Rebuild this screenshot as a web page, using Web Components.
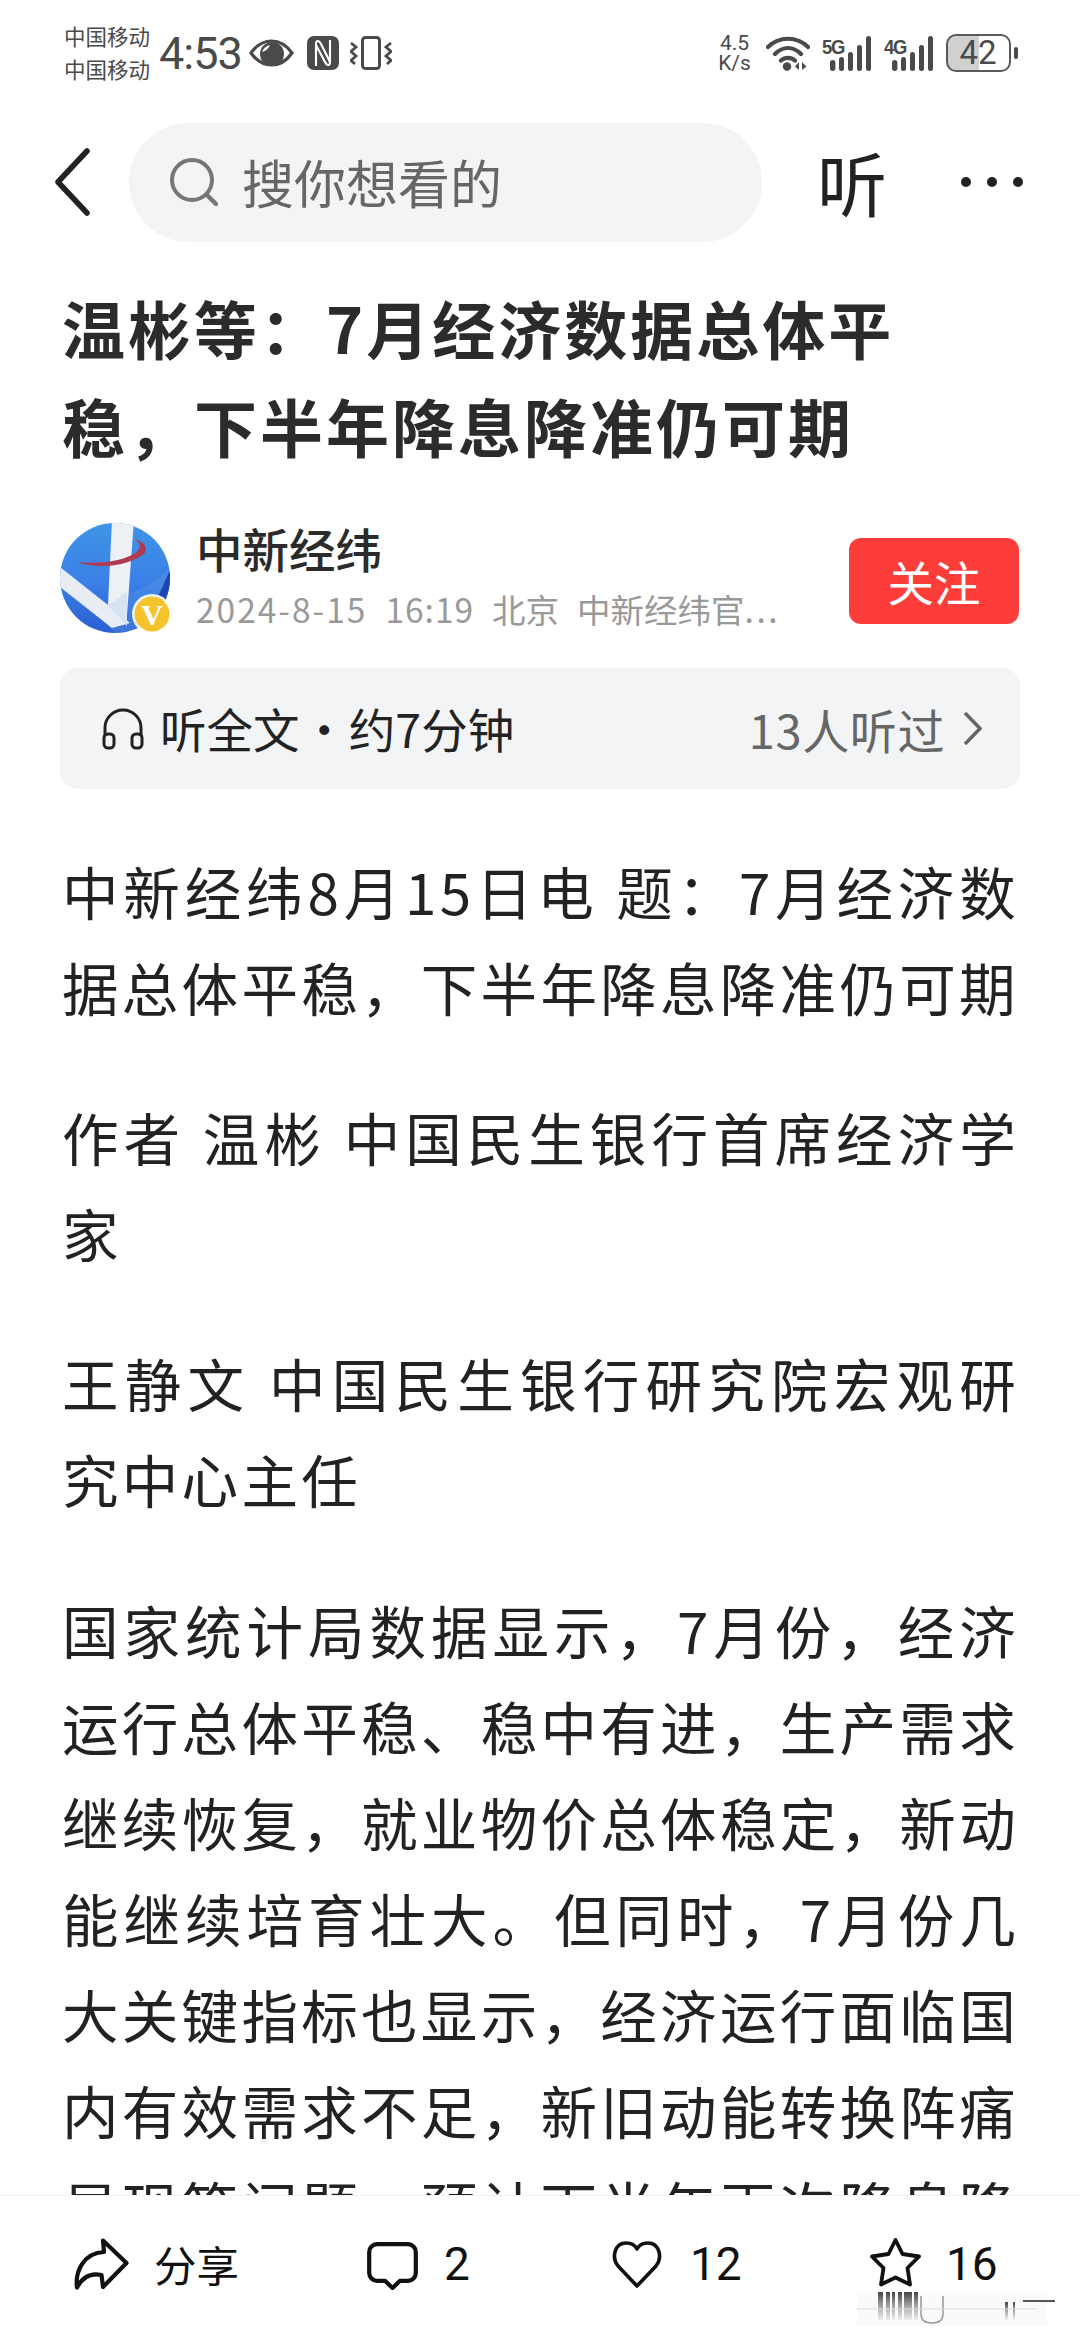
<!DOCTYPE html>
<html lang="zh">
<head>
<meta charset="utf-8">
<style>
  html, body { margin: 0; background: #fff; }
  body { font-family: "Noto Sans CJK SC", "Noto Sans", sans-serif; }
</style>
</head>
<body>
<news-page>
  <status-bar slot="top"></status-bar>
  <nav-bar slot="top"></nav-bar>
  <article-head slot="top" headline="温彬等：7月经济数据总体平稳，下半年降息降准仍可期"></article-head>
  <author-row slot="top" name="中新经纬"></author-row>
  <listen-card slot="top"></listen-card>
  <news-para>中新经纬8月15日电 题：7月经济数据总体平稳，下半年降息降准仍可期</news-para>
  <news-para>作者 温彬 中国民生银行首席经济学家</news-para>
  <news-para>王静文 中国民生银行研究院宏观研究中心主任</news-para>
  <news-para>国家统计局数据显示，7月份，经济运行总体平稳、稳中有进，生产需求继续恢复，就业物价总体稳定，新动能继续培育壮大。但同时，7月份几大关键指标也显示，经济运行面临国内有效需求不足，新旧动能转换阵痛显现等问题。预计下半年再次降息降</news-para>
  <action-bar slot="bottom"></action-bar>
</news-page>

<script>
const CJK = '"Noto Sans CJK SC", "Noto Sans", sans-serif';

class NewsPage extends HTMLElement {
  constructor() {
    super();
    this.attachShadow({mode: "open"});
    this.shadowRoot.innerHTML = `<style>
      :host { display: flex; flex-direction: column; width: 1080px; height: 2340px; overflow: hidden; background: #fff; position: relative; }
      #body { flex: 1; min-height: 0; overflow: hidden; padding: 0 61px 0 62px; }
      /* smeared gesture bar left in the screenshot */
      #smear { position: absolute; left: 857px; top: 2292px; }
    </style>
    <slot name="top"></slot>
    <div id="body"><slot></slot></div>
    <slot name="bottom"></slot>
    <svg id="smear" width="198" height="34" viewBox="0 0 198 34">
      <defs>
        <linearGradient id="sm" x1="0" y1="0" x2="0" y2="1">
          <stop offset="0" stop-color="#222" stop-opacity=".85"/><stop offset="1" stop-color="#666" stop-opacity=".1"/>
        </linearGradient>
      </defs>
      <rect x="0" y="0" width="190" height="34" fill="#f5f5f5" opacity=".5"/>
      <g fill="url(#sm)">
        <rect x="21" y="0" width="5" height="28"/><rect x="29" y="0" width="4" height="28"/><rect x="35" y="0" width="3" height="28"/>
        <rect x="41" y="0" width="4" height="28"/><rect x="47" y="0" width="8" height="28"/><rect x="57" y="0" width="4" height="28"/>
        <rect x="148" y="10" width="3" height="18"/><rect x="156" y="10" width="2" height="18"/>
      </g>
      <path d="M64 4V22Q64 31 75 31Q86 31 86 22V4" fill="none" stroke="#999" stroke-width="1.5"/>
      <path d="M0 17H180" stroke="#ddd" stroke-width="1"/>
      <path d="M166 9H198" stroke="#555" stroke-width="2"/>
    </svg>`;
  }
}

class StatusBar extends HTMLElement {
  constructor() {
    super();
    this.attachShadow({mode: "open"});
    this.shadowRoot.innerHTML = `<style>
      :host { display: flex; align-items: center; height: 106px; padding: 0 62px 0 64px; color: #4a4a4a; box-sizing: border-box; }
      #carrier { font: 400 21.5px/33px ${CJK}; width: 95px; flex: none; margin-top: -3px; }
      #time { font: 400 45px/1 Roboto, sans-serif; width: 90px; flex: none; letter-spacing: -1px; }
      .left { display: flex; align-items: center; gap: 13px; }
      .right { margin-left: auto; display: flex; align-items: center; }
      #speed { font: 400 21px/20px Roboto, sans-serif; text-align: center; width: 38px; margin-right: 12px; }
      #batt { box-sizing: border-box; width: 65px; height: 38px; border: 2.6px solid #5a5a5a; border-radius: 10px; margin-left: 13px; background: linear-gradient(90deg, #d0d0d0 50%, #fff 50%); font: 400 33px/33px Roboto, sans-serif; text-align: center; overflow: hidden; }
      #nub { width: 4.5px; height: 12px; border-radius: 2px; background: #4a4a4a; margin-left: 3px; }
      svg { display: block; flex: none; }
    </style>
    <div id="carrier">中国移动<br>中国移动</div>
    <div id="time">4:53</div>
    <div class="left">
      <svg width="45" height="28" viewBox="0 0 45 28">
        <path d="M2 14C8 5.5 15 2 22.5 2S37 5.5 43 14C37 22.5 30 26 22.5 26S8 22.5 2 14Z" fill="none" stroke="#4a4a4a" stroke-width="3.2"/>
        <circle cx="23" cy="15" r="12" fill="#4a4a4a"/><path d="M13 13a11 11 0 0 1 8-7C20 9 17 12 13 13Z" fill="#fff"/>
      </svg>
      <svg width="32" height="34" viewBox="0 0 32 34">
        <rect width="32" height="34" rx="7" fill="#4a4a4a"/>
        <path d="M9 30V8C9 4 12 4 14 8L23 26M23 4V26C23 30 20 30 18 26L9 9" fill="none" stroke="#fff" stroke-width="2.1"/>
      </svg>
      <svg width="42" height="34" viewBox="0 0 42 34" style="margin-left:-2px">
        <rect x="12.5" y="1.5" width="17" height="31" rx="3" fill="none" stroke="#4a4a4a" stroke-width="3"/>
        <path d="M1 7L6 11L1 15.5L6 20L1 24.5L5 28M41 7L36 11L41 15.5L36 20L41 24.5L37 28" fill="none" stroke="#4a4a4a" stroke-width="2.8"/>
      </svg>
    </div>
    <div class="right">
      <div id="speed">4.5<br>K/s</div>
      <svg width="44" height="35" viewBox="0 0 44 35">
        <path d="M2 11C13 0 31 0 42 11M9 18C17 10 27 10 35 18M15 24.5C19 21 25 21 29 24.5" fill="none" stroke="#4a4a4a" stroke-width="4.2" stroke-linecap="round"/>
        <circle cx="21" cy="30.5" r="4.2" fill="#4a4a4a"/><path d="M33 26L29 30.5L33 34ZM36 26L40.5 30.5L36 34Z" fill="#4a4a4a"/>
      </svg>
      <signal-bars label="5G" style="margin-left:12px"></signal-bars>
      <signal-bars label="4G" style="margin-left:13px"></signal-bars>
      <div id="batt">42</div>
      <div id="nub"></div>
    </div>`;
  }
}

class SignalBars extends HTMLElement {
  constructor() {
    super();
    this.attachShadow({mode: "open"});
    const label = this.getAttribute("label");
    this.shadowRoot.innerHTML = `<style>
      :host { display: block; width: 49px; height: 35px; position: relative; color: #4a4a4a; }
      svg { display: block; }
      span { position: absolute; left: 0; top: 0; font: 700 21px/21px "Liberation Sans", sans-serif; letter-spacing: -1.5px; transform: scaleX(.88); transform-origin: 0 0; }
    </style>
    <span>${label}</span>
    <svg width="49" height="35" viewBox="0 0 49 35">
      <g fill="#4a4a4a">
        <rect x="8" y="24" width="5.4" height="11" rx="2.7"/><rect x="17" y="21" width="5" height="14" rx="2.5"/>
        <rect x="26" y="16" width="5" height="19" rx="2.5"/><rect x="35" y="9" width="5" height="26" rx="2.5"/>
        <rect x="44" y="0" width="5" height="35" rx="2.5"/>
      </g>
    </svg>`;
  }
}

class NavBar extends HTMLElement {
  constructor() {
    super();
    this.attachShadow({mode: "open"});
    this.shadowRoot.innerHTML = `<style>
      :host { display: flex; align-items: center; height: 152px; padding: 0 0 0 55px; box-sizing: border-box; }
      #back { flex: none; margin-right: 38px; display: block; }
      #search { flex: none; width: 633px; height: 119px; border-radius: 60px; background: #f3f4f6; display: flex; align-items: center; padding-left: 41px; box-sizing: border-box; color: #666; }
      #search span { font: 400 52px/1 ${CJK}; margin-left: 24px; }
      #listen { font: 400 70px/1 ${CJK}; color: #222; margin-left: 55px; width: 70px; flex: none; }
      #more { margin-left: 74px; flex: none; }
      svg { display: block; }
    </style>
    <svg id="back" width="36" height="68" viewBox="0 0 36 68"><path d="M32 3L3 34L32 65" fill="none" stroke="#222" stroke-width="5.5" stroke-linecap="round" stroke-linejoin="round"/></svg>
    <div id="search">
      <svg width="48" height="48" viewBox="0 0 48 48"><circle cx="22" cy="22" r="20" fill="none" stroke="#777" stroke-width="4"/><path d="M37 37L46 46" stroke="#777" stroke-width="4.5" stroke-linecap="round"/></svg>
      <span>搜你想看的</span>
    </div>
    <div id="listen">听</div>
    <svg id="more" width="62" height="12" viewBox="0 0 62 12"><g fill="#222"><circle cx="5" cy="6" r="5"/><circle cx="31" cy="6" r="5"/><circle cx="57" cy="6" r="5"/></g></svg>`;
  }
}

class ArticleHead extends HTMLElement {
  constructor() {
    super();
    this.attachShadow({mode: "open"});
    this.shadowRoot.innerHTML = `<style>
      :host { display: block; padding: 20px 62px 0 62px; }
      h1 { margin: 0; font: 700 63px/98px ${CJK}; letter-spacing: 3px; color: #2b2b2b; width: 900px; }
    </style>
    <h1></h1>`;
    this.shadowRoot.querySelector("h1").textContent = this.getAttribute("headline");
  }
}

class AuthorRow extends HTMLElement {
  constructor() {
    super();
    this.attachShadow({mode: "open"});
    this.shadowRoot.innerHTML = `<style>
      :host { display: flex; align-items: center; padding: 34px 61px 0 60px; height: 176px; box-sizing: border-box; }
      #avatar { flex: none; display: block; }
      #info { flex: 1; min-width: 0; margin-left: 18px; margin-top: -7px; }
      #name { font: 500 46.5px/54px ${CJK}; color: #2b2b2b; margin-bottom: 12px; }
      #meta { font: 400 33.5px/44px ${CJK}; color: #999; white-space: nowrap; display: flex; gap: 18px; }
      #date { letter-spacing: 2px; }
      #clock { letter-spacing: 1px; }
      #dots { letter-spacing: 2.5px; }
      #follow { flex: none; width: 170px; height: 86px; border-radius: 12px; background: #fc3d39; color: #fff; font: 400 46.5px/86px ${CJK}; text-align: center; margin-top: 4px; }
    </style>
    <svg id="avatar" width="118" height="118" viewBox="0 0 118 118">
      <defs>
        <linearGradient id="av" x1="0" y1="0" x2="0" y2="1"><stop offset="0" stop-color="#3f95e6"/><stop offset=".55" stop-color="#3a7fe6"/><stop offset="1" stop-color="#2a5fd0"/></linearGradient>
        <clipPath id="avc"><circle cx="55" cy="58" r="55"/></clipPath>
      </defs>
      <circle cx="55" cy="58" r="55" fill="url(#av)"/>
      <g clip-path="url(#avc)">
        <path d="M108 50C90 70 60 75 30 88L60 118H118Z" fill="#5f9be6" opacity=".35"/>
        <path d="M110 50L118 50V90H92Z" fill="#1c46ac"/>
        <path d="M52 0H74L67 95L48 85Z" fill="#edf0f4"/>
        <path d="M0 47L48 85L70 103L52 108L0 67Z" fill="#e9edf3"/>
        <path d="M67 72L67 106L48 85Z" fill="#d7e3f1"/>
      </g>
      <path d="M17 42C38 50 70 46 85 33C88 26 82 20 73 19C82 22 82 30 72 35C58 42 38 44 17 42Z" fill="#b03a52"/>
      <circle cx="92" cy="94" r="20" fill="#fff" opacity=".9"/>
      <circle cx="92" cy="94" r="17.5" fill="#f5c42c"/>
      <text x="92" y="105" text-anchor="middle" font-family="Liberation Serif, serif" font-weight="700" font-size="30" fill="#fff">V</text>
    </svg>
    <div id="info">
      <div id="name">${this.getAttribute("name")}</div>
      <div id="meta"><span id="date">2024-8-15</span><span id="clock">16:19</span><span>北京</span><span>中新经纬官<span id="dots">...</span></span></div>
    </div>
    <div id="follow">关注</div>`;
  }
}

class ListenCard extends HTMLElement {
  constructor() {
    super();
    this.attachShadow({mode: "open"});
    this.shadowRoot.innerHTML = `<style>
      :host { display: flex; align-items: center; margin: 18px 60px 53px 60px; height: 121px; border-radius: 18px; background: #f3f4f6; padding: 0 38px 0 42px; box-sizing: border-box; }
      svg { display: block; flex: none; }
      #title { font: 400 46.5px/1 ${CJK}; color: #222; margin-left: 16px; word-spacing: -9px; }
      #count { margin-left: auto; font: 400 47px/1 ${CJK}; letter-spacing: .6px; color: #666; }
      #chev { margin-left: 18px; }
    </style>
    <svg width="42" height="42" viewBox="0 0 42 42">
      <path d="M3 28V20a18 18 0 0 1 36 0V28" fill="none" stroke="#222" stroke-width="3"/>
      <rect x="2" y="26" width="10" height="14" rx="4" fill="none" stroke="#222" stroke-width="3"/>
      <rect x="30" y="26" width="10" height="14" rx="4" fill="none" stroke="#222" stroke-width="3"/>
    </svg>
    <div id="title">听全文 · 约7分钟</div>
    <div id="count">13人听过</div>
    <svg id="chev" width="19" height="35" viewBox="0 0 19 35"><path d="M2 2L17 17.5L2 33" fill="none" stroke="#666" stroke-width="3.4"/></svg>`;
  }
}

class NewsPara extends HTMLElement {
  constructor() {
    super();
    this.attachShadow({mode: "open"});
    this.shadowRoot.innerHTML = `<style>
      :host { display: block; margin-bottom: 54px; font: 400 56.5px/96.1px ${CJK}; letter-spacing: 3.3px; color: #222; text-align: justify; }
    </style>
    <slot></slot>`;
  }
}

class ActionBar extends HTMLElement {
  constructor() {
    super();
    this.attachShadow({mode: "open"});
    this.shadowRoot.innerHTML = `<style>
      :host { display: grid; grid-template-columns: 293px 245px 257px 1fr; align-items: center; height: 145px; padding: 0 0 8px 74px; box-sizing: border-box; background: #fff; border-top: 1px solid #f2f2f2; color: #111; }
      .item { display: flex; align-items: center; }
      .item span { font: 400 46px/1 Roboto, ${CJK}; }
      .item .zh { font: 400 42.5px/1 ${CJK}; }
      svg { display: block; flex: none; }
    </style>
    <div class="item">
      <svg width="55" height="52" viewBox="0 0 55 52" style="margin-right:25px"><path d="M29 2.5L52.5 25L29 49L27.5 37C18 35 9 38 3 49.5C1 34 9 15 30 14Z" fill="none" stroke="#111" stroke-width="4.2" stroke-linejoin="round"/></svg>
      <span class="zh">分享</span>
    </div>
    <div class="item">
      <svg width="51" height="48" viewBox="0 0 51 48" style="margin-right:26px;margin-top:4px"><path d="M10 2.2H41a7.8 7.8 0 0 1 7.8 7.8V31a7.8 7.8 0 0 1-7.8 7.8H33L25.5 46L18 38.8H10A7.8 7.8 0 0 1 2.2 31V10A7.8 7.8 0 0 1 10 2.2Z" fill="none" stroke="#111" stroke-width="4.2" stroke-linejoin="round"/></svg>
      <span>2</span>
    </div>
    <div class="item">
      <svg width="50" height="49" viewBox="0 0 50 49" style="margin-right:28px"><path d="M25 46L6 26C-1 17 3 3 14 3C19 3 23 5 25 9C27 5 31 3 36 3C47 3 51 17 44 26Z" fill="none" stroke="#111" stroke-width="3.6" stroke-linejoin="round"/></svg>
      <span>12</span>
    </div>
    <div class="item">
      <svg width="53" height="50" viewBox="0 0 53 50" style="margin-right:24px;margin-top:-4px"><path d="M26.5 3L33.5 17L50 19.5L38.5 31L41 47.5L26.5 40.5L12 47.5L14.5 31L3 19.5L19.5 17Z" fill="none" stroke="#111" stroke-width="3.8" stroke-linejoin="round"/></svg>
      <span>16</span>
    </div>`;
  }
}

customElements.define("signal-bars", SignalBars);
customElements.define("status-bar", StatusBar);
customElements.define("nav-bar", NavBar);
customElements.define("article-head", ArticleHead);
customElements.define("author-row", AuthorRow);
customElements.define("listen-card", ListenCard);
customElements.define("news-para", NewsPara);
customElements.define("action-bar", ActionBar);
customElements.define("news-page", NewsPage);
</script>
</body>
</html>
